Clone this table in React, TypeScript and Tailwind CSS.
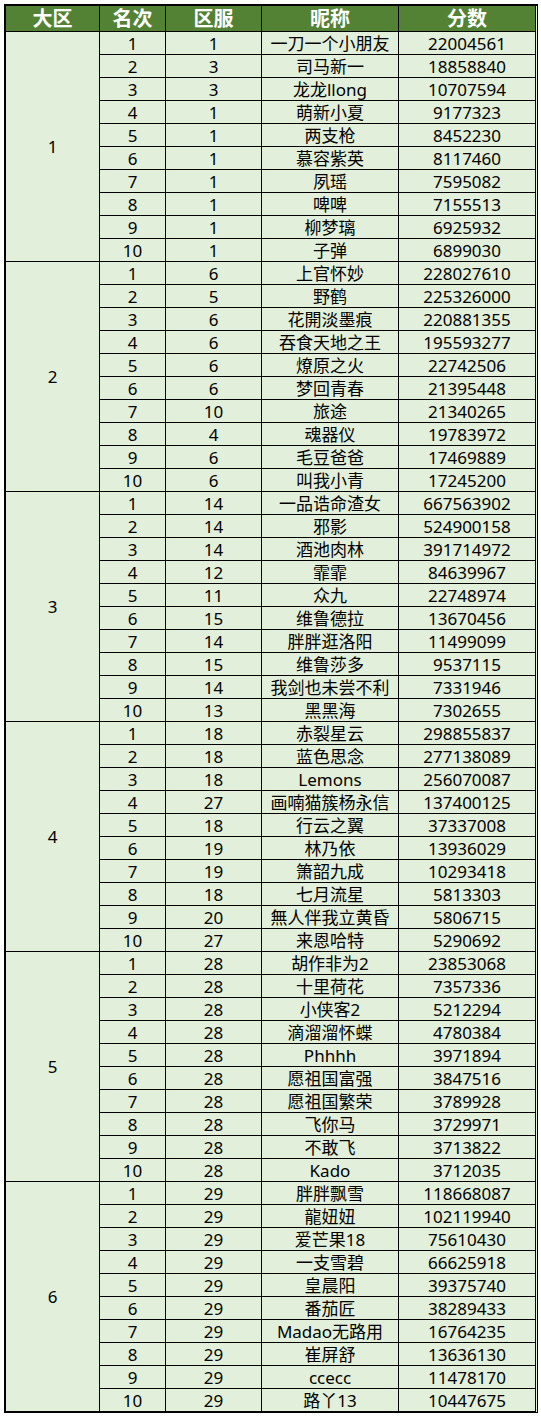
import React from "react";

type Row = [number, number, string, string];

const groups: { zone: number; rows: Row[] }[] = [
  {
    zone: 1,
    rows: [
      [1, 1, "一刀一个小朋友", "22004561"],
      [2, 3, "司马新一", "18858840"],
      [3, 3, "龙龙llong", "10707594"],
      [4, 1, "萌新小夏", "9177323"],
      [5, 1, "两支枪", "8452230"],
      [6, 1, "慕容紫英", "8117460"],
      [7, 1, "夙瑶", "7595082"],
      [8, 1, "啤啤", "7155513"],
      [9, 1, "柳梦璃", "6925932"],
      [10, 1, "子弹", "6899030"],
    ],
  },
  {
    zone: 2,
    rows: [
      [1, 6, "上官怀妙", "228027610"],
      [2, 5, "野鹤", "225326000"],
      [3, 6, "花開淡墨痕", "220881355"],
      [4, 6, "吞食天地之王", "195593277"],
      [5, 6, "燎原之火", "22742506"],
      [6, 6, "梦回青春", "21395448"],
      [7, 10, "旅途", "21340265"],
      [8, 4, "魂器仪", "19783972"],
      [9, 6, "毛豆爸爸", "17469889"],
      [10, 6, "叫我小青", "17245200"],
    ],
  },
  {
    zone: 3,
    rows: [
      [1, 14, "一品诰命渣女", "667563902"],
      [2, 14, "邪影", "524900158"],
      [3, 14, "酒池肉林", "391714972"],
      [4, 12, "霏霏", "84639967"],
      [5, 11, "众九", "22748974"],
      [6, 15, "维鲁德拉", "13670456"],
      [7, 14, "胖胖逛洛阳", "11499099"],
      [8, 15, "维鲁莎多", "9537115"],
      [9, 14, "我剑也未尝不利", "7331946"],
      [10, 13, "黑黑海", "7302655"],
    ],
  },
  {
    zone: 4,
    rows: [
      [1, 18, "赤裂星云", "298855837"],
      [2, 18, "蓝色思念", "277138089"],
      [3, 18, "Lemons", "256070087"],
      [4, 27, "画喃猫簇杨永信", "137400125"],
      [5, 18, "行云之翼", "37337008"],
      [6, 19, "林乃依", "13936029"],
      [7, 19, "箫韶九成", "10293418"],
      [8, 18, "七月流星", "5813303"],
      [9, 20, "無人伴我立黄昏", "5806715"],
      [10, 27, "来恩哈特", "5290692"],
    ],
  },
  {
    zone: 5,
    rows: [
      [1, 28, "胡作非为2", "23853068"],
      [2, 28, "十里荷花", "7357336"],
      [3, 28, "小侠客2", "5212294"],
      [4, 28, "滴溜溜怀蝶", "4780384"],
      [5, 28, "Phhhh", "3971894"],
      [6, 28, "愿祖国富强", "3847516"],
      [7, 28, "愿祖国繁荣", "3789928"],
      [8, 28, "飞你马", "3729971"],
      [9, 28, "不敢飞", "3713822"],
      [10, 28, "Kado", "3712035"],
    ],
  },
  {
    zone: 6,
    rows: [
      [1, 29, "胖胖飘雪", "118668087"],
      [2, 29, "龍妞妞", "102119940"],
      [3, 29, "爱芒果18", "75610430"],
      [4, 29, "一支雪碧", "66625918"],
      [5, 29, "皇晨阳", "39375740"],
      [6, 29, "番茄匠", "38289433"],
      [7, 29, "Madao无路用", "16764235"],
      [8, 29, "崔屏舒", "13636130"],
      [9, 29, "ccecc", "11478170"],
      [10, 29, "路丫13", "10447675"],
    ],
  },
];

const headers = ["大区", "名次", "区服", "昵称", "分数"];

export default function App() {
  return (
    <div
      className="min-h-[1416px] w-[541px] bg-white pt-[4px] pl-[4px]"
      style={{ fontFamily: '"Noto Sans", "Noto Sans CJK SC", sans-serif' }}
    >
      <div className="grid w-[534px] grid-cols-[94px_66px_96px_137px_137px] border-t-2 border-l-2 border-r border-b border-black bg-[#e2efda] text-[17px] leading-none text-black">
        {headers.map((h) => (
          <div
            key={h}
            className="flex h-[26px] items-center justify-center border-r border-b border-black bg-[#548235] text-[20px] font-bold text-white"
          >
            {h}
          </div>
        ))}
        {groups.map((g) => (
          <React.Fragment key={g.zone}>
            <div
              className="row-span-10 flex items-center justify-center border-r border-b border-black"
              style={{ gridRow: "span 10 / span 10" }}
            >
              {g.zone}
            </div>
            {g.rows.map((r) => (
              <React.Fragment key={r[0]}>
                <div className="flex h-[23px] items-center justify-center border-r border-b border-black">
                  {r[0]}
                </div>
                <div className="flex h-[23px] items-center justify-center border-r border-b border-black">
                  {r[1]}
                </div>
                <div className="flex h-[23px] items-center justify-center whitespace-nowrap border-r border-b border-black">
                  {r[2]}
                </div>
                <div className="flex h-[23px] items-center justify-center border-r border-b border-black">
                  {r[3]}
                </div>
              </React.Fragment>
            ))}
          </React.Fragment>
        ))}
      </div>
    </div>
  );
}
